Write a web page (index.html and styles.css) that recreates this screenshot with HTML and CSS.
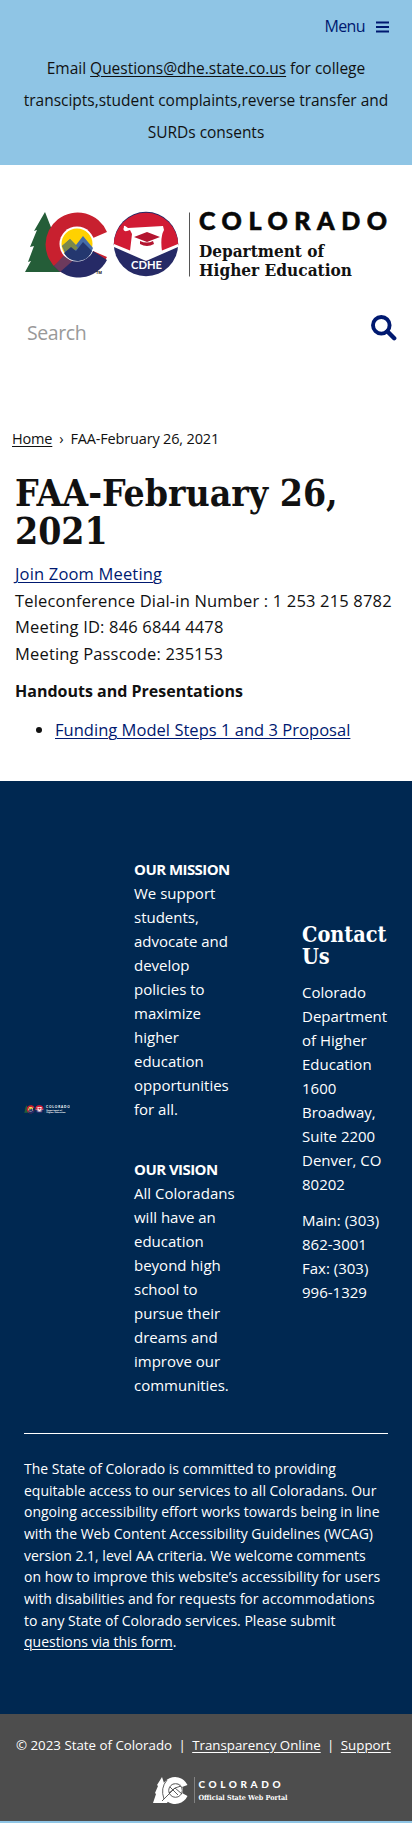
FILE: index.html
```html
<!DOCTYPE html>
<html lang="en">
<head>
<meta charset="utf-8">
<meta name="viewport" content="width=device-width, initial-scale=1">
<title>FAA-February 26, 2021</title>
<link rel="stylesheet" href="styles.css">
</head>
<body>
<header class="topbar">
  <nav class="menu"><span>Menu</span>
    <svg width="13" height="12" viewBox="0 0 13 12"><path d="M0 1.500h13M0 6h13M0 10.500h13" stroke="#001970" stroke-width="2"/></svg>
  </nav>
  <p class="notice">Email <a href="#">Questions@dhe.state.co.us</a> for college<br>transcipts,student complaints,reverse transfer and<br>SURDs consents</p>
</header>

<div class="brand">
  <svg class="logo" viewBox="0 0 364 72" width="364" height="72">
    <symbol id="mark" viewBox="0 0 158 72" overflow="visible">
      <path d="M21 1 10 20 13 19 6 36 10 35 4 51 7 50 1 61H36L44 45 30 24z" fill="#245d38"/>
      <path d="M83 21A32 32 0 1 0 83 46L69 40A17 17 0 1 1 69 27z" fill="#c8202f"/>
      <path d="M30 55 45 43 69 40l14 9A32 32 0 0 1 30 55z" fill="#262a66"/>
      <path d="M30 55 44 40l8 7-16 14z" fill="#6d3a5d"/>
      <circle cx="53" cy="33" r="17.500" fill="#fff"/>
      <circle cx="53" cy="33" r="15.500" fill="#ffd100"/>
      <path d="m38 35 8-7 6 6 7-9 10 12a15.500 15.500 0 0 1-30 0z" fill="#456ca9"/>
      <path d="m38 35 8-7 8 9-9 8z" fill="#7c8949"/>
      <path d="m40 42 7-6 5 4 7-9 9 9a15.500 15.500 0 0 1-28 2z" fill="#24376f"/>
      <circle cx="122" cy="33" r="32.200" fill="#262a66"/>
      <path d="M89.800 34a32.200 32.200 0 0 1 64.400 0l-32.200 14z" fill="#d11b34"/>
      <path d="M90 33l32 13 32-13v3l-32 14-32-14z" fill="#fff"/>
      <path d="M100 16q-2 5 3 4l3-1 2 4-2 17 16 7 16-7q-2-14 2-21l-1-4-35 2q-5-4-4-1z" fill="#fff"/>
      <path d="m110 26 13-5 13 5-13 5zM116 30q7 3 13 0l1 3q-7 4-14 0z" fill="#b31530"/>
      <text x="107" y="57.500" class="cdhe" textLength="31" lengthAdjust="spacingAndGlyphs">CDHE</text>
    </symbol>
    <use href="#mark" width="158" height="72"/>
    <text x="72" y="63" class="tm">TM</text>
    <path d="M165.500 1.500v64" stroke="#555" stroke-width="1"/>
    <text x="175" y="19" class="state" textLength="188">COLORADO</text>
    <text x="175" y="46" class="dept" textLength="125" lengthAdjust="spacingAndGlyphs">Department of</text>
    <text x="175" y="65" class="dept" textLength="153" lengthAdjust="spacingAndGlyphs">Higher Education</text>
  </svg>
</div>

<div class="search">
  <span>Search</span>
  <svg width="26" height="26" viewBox="0 0 26 26" fill="none" stroke="#001970"><circle cx="10.300" cy="10.300" r="8.300" stroke-width="3.900"/><path d="m16.500 16.500 6.700 6.700" stroke-width="4.400" stroke-linecap="round"/></svg>
</div>

<nav class="crumbs"><a href="#">Home</a><span>›</span><span>FAA-February 26, 2021</span></nav>

<main>
  <h1>FAA-February 26,<br>2021</h1>
  <p class="details"><a href="#">Join Zoom Meeting</a><br>Teleconference Dial-in Number : 1 253 215 8782<br>Meeting ID: 846 6844 4478<br>Meeting Passcode: 235153</p>
  <h2>Handouts and Presentations</h2>
  <ul><li><a href="#">Funding Model Steps 1 and 3 Proposal</a></li></ul>
</main>

<footer class="site">
  <div class="columns">
    <svg class="mini" width="46" height="9" viewBox="0 0 364 71">
      <use href="#mark" width="158" height="72"/>
      <path d="M165 0v65" stroke="#9ab"/>
      <text x="175" y="24" class="state light" textLength="188">COLORADO</text>
      <text x="176" y="46" class="dept light" textLength="125">Department of</text>
      <text x="176" y="65" class="dept light" textLength="153">Higher Education</text>
    </svg>
    <div class="about">
      <p><b>OUR MISSION</b><br>We support<br>students,<br>advocate and<br>develop<br>policies to<br>maximize<br>higher<br>education<br>opportunities<br>for all.</p>
      <p><b>OUR VISION</b><br>All Coloradans<br>will have an<br>education<br>beyond high<br>school to<br>pursue their<br>dreams and<br>improve our<br>communities.</p>
    </div>
    <div class="contact">
      <h3>Contact<br>Us</h3>
      <p>Colorado<br>Department<br>of Higher<br>Education<br>1600<br>Broadway,<br>Suite 2200<br>Denver, CO<br>80202</p>
      <p>Main: (303)<br>862-3001<br>Fax: (303)<br>996-1329</p>
    </div>
  </div>
  <p class="access">The State of Colorado is committed to providing<br>equitable access to our services to all Coloradans. Our<br>ongoing accessibility effort works towards being in line<br>with the Web Content Accessibility Guidelines (WCAG)<br>version 2.1, level AA criteria. We welcome comments<br>on how to improve this website’s accessibility for users<br>with disabilities and for requests for accommodations<br>to any State of Colorado services. Please submit<br><a href="#">questions via this form</a>.</p>
</footer>

<div class="legal">
  <div class="links"><span>© 2023 State of Colorado</span><i>|</i><a href="#">Transparency Online</a><i>|</i><a href="#">Support</a></div>
  <svg width="136" height="30" viewBox="0 0 136 30">
    <path d="M9 1 4 9l1 1-3 7 1 1-3 9h14l5-8-7-9z" fill="#fff"/>
    <path d="M34.500 9A13.500 13.500 0 1 0 34.500 20L29 17A7 7 0 1 1 29 11z" fill="#fff"/>
    <circle cx="22.500" cy="14.500" r="7.500" fill="#fff"/>
    <g fill="none" stroke="#4d4d4d" stroke-width=".9"><circle cx="22.500" cy="14.500" r="6.800"/><path d="m9 25 9-9 4-4 7 6M16 17l6-5 6-2M17 11l8 8M14 4Q7 12 11 23"/></g>
    <path d="M41.500 1v26" stroke="#999" stroke-width=".7"/>
    <text x="45.500" y="11.500" class="portal-state" textLength="82">COLORADO</text>
    <text x="45.500" y="23.500" class="portal" textLength="89" lengthAdjust="spacingAndGlyphs">Official State Web Portal</text>
  </svg>
</div>
</body>
</html>
```

FILE: styles.css
```css
* { box-sizing: border-box; }
body { margin: 0; min-height: 1823px; background: #8fc5e5; color: #111; font: 16px/24px "Open Sans", "Noto Sans", sans-serif; white-space: nowrap; }
p, h1, h2, h3, ul { margin: 0; padding: 0; }
a { color: inherit; text-underline-offset: 2px; text-decoration-thickness: 1px; }
svg { display: block; flex: none; }

.topbar { height: 165px; background: #8fc5e5; padding: 14px 22px 0; }
.menu { display: flex; justify-content: flex-end; align-items: center; gap: 11px; height: 25px; padding-right: 1px; color: #001970; font-size: 16px; letter-spacing: -.6px; }
.menu span { margin-top: -2px; }
.notice { margin: 13px -10px 0; text-align: center; font-size: 15.500px; letter-spacing: -.02px; line-height: 32px; }

.brand { height: 128px; background: #fff; padding: 46px 24px 0; }
.logo { overflow: visible; }
.cdhe { font: 700 11px Lato, sans-serif; fill: #fff; }
.tm { font: 700 4px "Open Sans", sans-serif; fill: #222; }
.state { font: 900 25px Lato, sans-serif; fill: #080808; stroke: #080808; stroke-width: .6px; }
.dept { font: 700 16px "DejaVu Serif", serif; fill: #111; }
.light { fill: #fff; stroke: none; }

.search { display: flex; justify-content: space-between; height: 132px; background: #fff; padding: 22px 15px 0 27px; color: #999; font-size: 19.500px; letter-spacing: -.4px; }
.search span { padding-top: 4px; line-height: 28px; }

.crumbs { display: flex; gap: 7px; height: 38px; background: #fff; padding: 4px 12px 0; font-size: 14.500px; letter-spacing: -.17px; line-height: 20px; }

main { display: block; height: 318px; background: #fff; padding: 11px 15px 0; }
h1 { font: 700 37px/38px "DejaVu Serif", serif; font-stretch: condensed; }
.details { margin-top: 11px; font-size: 16.500px; letter-spacing: .17px; line-height: 26.500px; }
.details a, li a { color: #001970; }
h2 { margin-top: 11px; font-size: 16px; line-height: 26px; font-weight: 700; }
ul { padding-left: 40px; margin-top: 13px; font-size: 16.500px; letter-spacing: .03px; line-height: 26px; }

.site { height: 933px; background: #002851; color: #fff; padding: 76px 24px 0; }
.columns { display: flex; height: 577px; border-bottom: 1px solid #fff; font-size: 15px; }
.mini { margin-top: 248px; }
.about { width: 109px; margin-left: 64px; }
.about p + p { margin-top: 36px; }
.about b { font-weight: 700; letter-spacing: -.55px; }
.contact { width: 85px; margin-left: 59px; padding-top: 67px; }
h3 { font: 700 21.500px/22px "DejaVu Serif", serif; font-stretch: condensed; }
.contact p { margin-top: 12px; }
.access { padding-top: 24px; font-size: 14px; line-height: 21.650px; }

.legal { height: 107px; background: #4d4d4d; color: #fff; padding: 20px 16px 0; }
.links { display: flex; gap: 6.400px; font-size: 13.300px; line-height: 22px; }
.links i { font-style: normal; }
.legal svg { margin: 20px 0 0 137px; }
.portal-state { font: 900 10px Lato, sans-serif; fill: #fff; }
.portal { font: 700 7px "DejaVu Serif", serif; fill: #fff; }
```
